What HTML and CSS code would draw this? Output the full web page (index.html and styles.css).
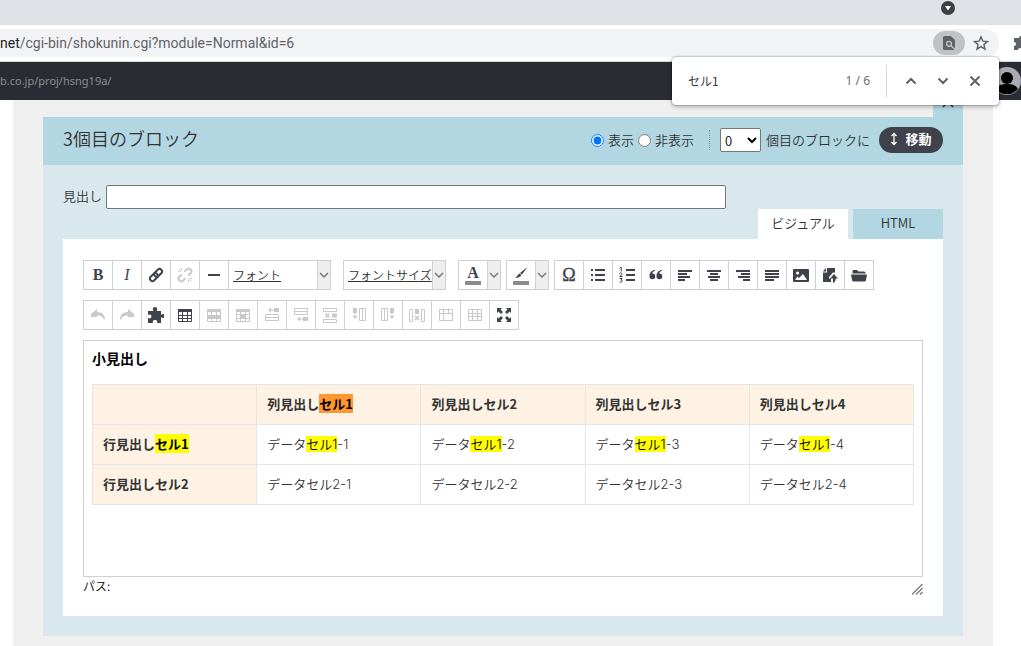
FILE: index.html
```html
<!DOCTYPE html>
<html lang="ja">
<head>
<meta charset="utf-8">
<title>ブロック編集</title>
<link rel="stylesheet" href="styles.css">
</head>
<body>
<div class="tabstrip">
  <button class="tab-search" aria-label="タブを検索"><svg width="14" height="14" viewBox="0 0 14 14"><circle cx="7" cy="7" r="7" fill="#3c4043"/><path d="M4 5h6L7 9.500z" fill="#fff"/></svg></button>
</div>
<div class="browser-bar">
  <div class="omnibox">
    <span class="url"><b>net</b>/cgi-bin/shokunin.cgi?module=Normal&amp;id=6</span>
    <button class="find-chip" aria-label="ページ内検索"><svg width="16" height="16" viewBox="0 0 16 16"><path d="M3.500 1h6.300L14 5v8.500a1.500 1.500 0 0 1-1.500 1.500h-9A1.500 1.500 0 0 1 2 13.500v-11A1.500 1.500 0 0 1 3.500 1z" fill="#5f6368"/><circle cx="8" cy="8.800" r="2.400" fill="none" stroke="#c1c2c4" stroke-width="1.400"/><path d="M9.800 10.600L14 14.500" stroke="#c1c2c4" stroke-width="1.400"/></svg></button>
    <button class="star" aria-label="ブックマーク"><svg width="16" height="16" viewBox="0 0 16 16"><path d="M8 1.800l1.800 4.300 4.700.4-3.600 3.100 1.100 4.600L8 11.700l-4 2.500 1.100-4.600-3.600-3.100 4.700-.4z" fill="none" stroke="#5f6368" stroke-width="1.400"/></svg></button>
  </div>
  <button class="extension" aria-label="拡張機能"><svg width="16" height="16" viewBox="0 0 16 16"><path d="M2 3h4a2 2 0 0 1 4 0h3v4a2 2 0 0 1 0 4v4H9a2 2 0 0 0-4 0H1v-4a2 2 0 0 0 0-4V3z" fill="#5f6368"/></svg></button>
</div>
<header class="site-header">
  <a href="#" class="site-url">b.co.jp/proj/hsng19a/</a>
  <svg class="avatar" width="28" height="28" viewBox="0 0 28 28"><circle cx="14" cy="14" r="14" fill="#a9aab4"/><circle cx="14" cy="11" r="6" fill="#000"/><path d="M3 22c2-4 6-5 11-5s9 1 11 5a14 14 0 0 1-22 0z" fill="#000"/></svg>
</header>

<div class="findbar" role="search">
  <input type="text" class="find-input" value="セル1" aria-label="検索" autofocus>
  <span class="find-count">1 / 6</span>
  <button aria-label="前へ"><svg width="12" height="12" viewBox="0 0 12 12"><path d="M1.500 8.500L6 4l4.500 4.500"/></svg></button>
  <button aria-label="次へ"><svg width="12" height="12" viewBox="0 0 12 12"><path d="M1.500 3.500L6 8l4.500-4.500"/></svg></button>
  <button aria-label="閉じる"><svg width="12" height="12" viewBox="0 0 12 12"><path d="M1.500 1.500l9 9M10.500 1.500l-9 9"/></svg></button>
</div>

<main class="page">
  <section class="block">
    <button class="block-close" aria-label="ブロックを閉じる"><svg width="12" height="12" viewBox="0 0 12 12"><path d="M1 1l10 10M11 1L1 11" stroke="#333" stroke-width="1.500"/></svg></button>
    <div class="block-head">
      <h2>3個目のブロック</h2>
      <div class="visibility">
        <label><input type="radio" name="vis" checked>表示</label>
        <label><input type="radio" name="vis">非表示</label>
      </div>
      <div class="mover">
        <select id="pos"><option>0</option></select>
        <label for="pos">個目のブロックに</label>
        <button class="move"><svg width="8" height="14" viewBox="0 0 8 14"><path d="M4 2v10M1.500 4L4 1.500 6.500 4M1.500 10L4 12.500 6.500 10" fill="none" stroke="#fff" stroke-width="1.300"/></svg>移動</button>
      </div>
    </div>
    <div class="block-body">
      <div class="field"><label for="midashi">見出し</label><input type="text" id="midashi"></div>
      <div class="tabs"><button class="tab active">ビジュアル</button><button class="tab">HTML</button></div>
      <div class="panel">
        <div class="toolbar">
          <div class="group">
            <button class="glyph" aria-label="太字"><b>B</b></button>
            <button class="glyph" aria-label="斜体"><i>I</i></button>
            <button aria-label="リンク"><svg viewBox="0 0 16 16"><g transform="rotate(-45 8 8)" fill="none" stroke="currentColor" stroke-width="2"><rect x="0.500" y="5.500" width="9" height="5" rx="2.500"/><rect x="6.500" y="5.500" width="9" height="5" rx="2.500"/></g></svg></button>
            <button class="off" aria-label="リンク解除"><svg viewBox="0 0 16 16"><g transform="rotate(-45 8 8)" fill="none" stroke="currentColor" stroke-width="2"><path d="M6 5.200H3a2.800 2.800 0 0 0 0 5.600h3M10 5.200h3a2.800 2.800 0 0 1 0 5.600h-3"/></g><path d="M4.500 1v2.500M1 4.500h2.500M2 2l1.500 1.500M11.500 12.500V15M12.500 11.500H15M12.500 12.500L14 14" stroke="currentColor"/></svg></button>
            <button aria-label="水平線"><svg viewBox="0 0 16 16"><path d="M2 7h12v2H2z" fill="currentColor"/></svg></button>
            <button class="combo"><span>フォント</span><em><svg viewBox="0 0 10 10"><path d="M1 3l4 4 4-4"/></svg></em></button>
          </div>
          <div class="group wide">
            <button class="combo"><span>フォントサイズ</span><em><svg viewBox="0 0 10 10"><path d="M1 3l4 4 4-4"/></svg></em></button>
          </div>
          <div class="group wide">
            <button class="glyph color" aria-label="文字色"><b>A</b></button>
            <button class="drop" aria-label="文字色を選択"><svg viewBox="0 0 10 10"><path d="M1 3l4 4 4-4"/></svg></button>
          </div>
          <div class="group">
            <button class="color" aria-label="背景色"><svg viewBox="0 0 16 16"><path d="M14.500 2L9 9.500 7 8zM6.500 8.500l2 1.600C7 12.500 5 13 2 13c2-1 2.500-3.500 4.500-4.500z" fill="currentColor"/></svg></button>
            <button class="drop" aria-label="背景色を選択"><svg viewBox="0 0 10 10"><path d="M1 3l4 4 4-4"/></svg></button>
          </div>
          <div class="group">
            <button class="glyph omega" aria-label="特殊文字">Ω</button>
            <button aria-label="箇条書き"><svg viewBox="0 0 16 16"><path d="M1 2h2v2H1zM5 2h10v2H5zM1 7h2v2H1zM5 7h10v2H5zM1 12h2v2H1zM5 12h10v2H5z" fill="currentColor"/></svg></button>
            <button aria-label="番号付きリスト"><svg viewBox="0 0 16 16"><path d="M7 2h9v2H7zM7 7h9v2H7zM7 12h9v2H7z" fill="currentColor"/><path d="M.8 1L2.200 0v4.500M.5 6.500c1-1 3-.5 2.500.8L.8 9.500h2.700M.5 11.500h2.500l-1 1.500c2 0 1.500 2.500-1.300 2.200" fill="none" stroke="currentColor"/></svg></button>
            <button aria-label="引用"><svg viewBox="0 0 16 16"><path d="M7 3C3 3.500 1.500 6 1.500 9.500a2.900 2.900 0 1 0 2.800-3C4.500 5 5.500 4.200 7 4zM14 3c-4 .5-5.500 3-5.500 6.500a2.900 2.900 0 1 0 2.800-3c.2-1.500 1.200-2.300 2.700-2.500z" fill="currentColor"/></svg></button>
            <button aria-label="左揃え"><svg viewBox="0 0 16 16"><path d="M1 3h14v2H1zM1 6h9v2H1zM1 9h12v2H1zM1 12h7v2H1z" fill="currentColor"/></svg></button>
            <button aria-label="中央揃え"><svg viewBox="0 0 16 16"><path d="M1 3h14v2H1zM4 6h8v2H4zM2 9h12v2H2zM4 12h8v2H4z" fill="currentColor"/></svg></button>
            <button aria-label="右揃え"><svg viewBox="0 0 16 16"><path d="M1 3h14v2H1zM6 6h9v2H6zM3 9h12v2H3zM8 12h7v2H8z" fill="currentColor"/></svg></button>
            <button aria-label="両端揃え"><svg viewBox="0 0 16 16"><path d="M1 3h14v2H1zM1 6h14v2H1zM1 9h14v2H1zM1 12h9v2H1z" fill="currentColor"/></svg></button>
            <button aria-label="画像"><svg viewBox="0 0 16 16"><path fill-rule="evenodd" d="M1 2h14q1 0 1 1v11q0 1-1 1H1q-1 0-1-1V3q0-1 1-1zM2 13h12l-4-6-4 4-1.500-1.500zM3 6a1.600 1.600 0 1 0 3.200 0A1.600 1.600 0 1 0 3 6z" fill="currentColor"/></svg></button>
            <button aria-label="ファイル挿入"><svg viewBox="0 0 16 16"><path d="M5 1h8v4.500h-2l-4 4.500v1.500h2V15H1V5.500h4zM4 1v3.500H.8zM12 7l4 4.500h-2.300c0 2-.7 3.500-2.700 4.500v-4.500H8z" fill="currentColor"/></svg></button>
            <button aria-label="ファイル管理"><svg viewBox="0 0 16 16"><path d="M1.500 6V4q0-1 1-1H6l1.500 1.500H13q1.500 0 1.500 1.500v.5h-13zM0 7.500h16L15 13q-.3 1.500-1.500 1.500h-11Q1.300 14.500 1 13z" fill="currentColor"/></svg></button>
          </div>
        </div>
        <div class="toolbar">
          <div class="group">
            <button class="off" aria-label="元に戻す"><svg viewBox="0 0 16 16"><path d="M1 7l6-5v3c5 0 8 3 8 7.500h-1.500C13.500 9.500 11 8.500 7 8.500V10H1z" fill="currentColor"/></svg></button>
            <button class="off" aria-label="やり直す"><svg viewBox="0 0 16 16"><path d="M15 7L9 2v3c-5 0-8 3-8 7.500h1.500C2.500 9.500 5 8.500 9 8.500V10h6z" fill="currentColor"/></svg></button>
            <button aria-label="部品"><svg viewBox="0 0 16 16"><path d="M0 4h5.500C4 2 5 0 7 0s3 2 1.500 4H13v4c1-1.500 4-1.500 4 1s-3 2.500-4 1v6H9c1-2-.5-3-2-3s-3 1-2 3H0v-5c2 1 3.500 0 3.500-1.500S2 7 0 8z" fill="currentColor"/></svg></button>
            <button aria-label="表"><svg viewBox="0 0 16 16"><path d="M1.500 2.500h13v12h-13z" fill="none" stroke="currentColor"/><path d="M1 2h14v3H1z" fill="currentColor"/><path d="M1 8.500h14M1 11.500h14M5.500 4v10M10.500 4v10" stroke="currentColor"/></svg></button>
            <button class="off" aria-label="行のプロパティ"><svg viewBox="0 0 16 16"><path d="M1.500 2.500h13v12h-13zM1 11.500h14M5.500 4v10M10.500 4v10" fill="none" stroke="currentColor"/><path d="M1 2h14v3H1zM1 8h14v3H1z" fill="currentColor"/></svg></button>
            <button class="off" aria-label="セルのプロパティ"><svg viewBox="0 0 16 16"><path d="M1.500 2.500h13v12h-13zM1 7.500h14M1 11.500h14M5.500 4v10M10.500 4v10" fill="none" stroke="currentColor"/><path d="M1 2h14v3H1zM5 7h6v5H5z" fill="currentColor"/></svg></button>
            <button class="off" aria-label="上に行を挿入"><svg viewBox="0 0 16 16"><path d="M1.500 7.500h13v6h-13zM1.500 10.500h13" fill="none" stroke="currentColor"/><path d="M10 1h5v4h-5zM4 3l3-2.500v2h3v1H7v2z" fill="currentColor"/></svg></button>
            <button class="off" aria-label="下に行を挿入"><svg viewBox="0 0 16 16"><path d="M1.500 1.500h13v6h-13zM1.500 4.500h13" fill="none" stroke="currentColor"/><path d="M10 10h5v4h-5zM4 12l3-2.500v2h3v1H7v2z" fill="currentColor"/></svg></button>
            <button class="off" aria-label="行を削除"><svg viewBox="0 0 16 16"><path d="M1.500 1.500h13v3h-13zM1.500 12.500h13v3h-13z" fill="none" stroke="currentColor"/><path d="M3.500 6.500l4 4M7.500 6.500l-4 4" stroke="currentColor" stroke-width="1.500"/><path d="M10 6.500h5v4h-5z" fill="currentColor"/></svg></button>
            <button class="off" aria-label="左に列を挿入"><svg viewBox="0 0 16 16"><path d="M8.500 1.500h6v12h-6zM11.500 1.500v12" fill="none" stroke="currentColor"/><path d="M2 1h4v5H2zM4 12L1.500 9h2V6h1v3h2z" fill="currentColor"/></svg></button>
            <button class="off" aria-label="右に列を挿入"><svg viewBox="0 0 16 16"><path d="M1.500 1.500h6v12h-6zM4.500 1.500v12" fill="none" stroke="currentColor"/><path d="M10 1h4v5h-4zM12 12L9.500 9h2V6h1v3h2z" fill="currentColor"/></svg></button>
            <button class="off" aria-label="列を削除"><svg viewBox="0 0 16 16"><path d="M.5 2.500h3v12h-3zM12.500 2.500h3v12h-3z" fill="none" stroke="currentColor"/><path d="M6 9l4 4M10 9l-4 4" stroke="currentColor" stroke-width="1.500"/><path d="M6 2h4v5H6z" fill="currentColor"/></svg></button>
            <button class="off" aria-label="セルを分割"><svg viewBox="0 0 16 16"><path d="M1.500 2.500h13v11h-13zM1.500 6.500h13M5.500 2.500v11M10.500 2.500v4" fill="none" stroke="currentColor"/></svg></button>
            <button class="off" aria-label="セルを結合"><svg viewBox="0 0 16 16"><path d="M1.500 2.500h13v11h-13zM1.500 6.500h13M1.500 9.500h13M5.500 2.500v11M10.500 2.500v11" fill="none" stroke="currentColor"/></svg></button>
            <button aria-label="全画面"><svg viewBox="0 0 16 16"><path d="M1 1h5L4.500 2.500 7 5 5 7 2.500 4.500 1 6zM15 1h-5l1.500 1.500L9 5l2 2 2.500-2.500L15 6zM1 15h5l-1.500-1.500L7 11 5 9l-2.500 2.500L1 10zM15 15h-5l1.500-1.500L9 11l2-2 2.500 2.500L15 10z" fill="currentColor"/></svg></button>
          </div>
        </div>
        <div class="editor" contenteditable="true">
          <h3>小見出し</h3>
          <table>
            <tr><th></th><th>列見出し<mark class="current">セル1</mark></th><th>列見出しセル2</th><th>列見出しセル3</th><th>列見出しセル4</th></tr>
            <tr><th>行見出し<mark>セル1</mark></th><td>データ<mark>セル1</mark>-1</td><td>データ<mark>セル1</mark>-2</td><td>データ<mark>セル1</mark>-3</td><td>データ<mark>セル1</mark>-4</td></tr>
            <tr><th>行見出しセル2</th><td>データセル2-1</td><td>データセル2-2</td><td>データセル2-3</td><td>データセル2-4</td></tr>
          </table>
        </div>
        <div class="status"><span>パス:</span><svg width="11" height="11" viewBox="0 0 11 11"><path d="M0 10.500L10.500 0M4 10.500L10.500 4M8 10.500l2.500-2.500" stroke="#777" stroke-width="1.300"/></svg></div>
      </div>
    </div>
  </section>
</main>
</body>
</html>
```

FILE: styles.css
```css
* { box-sizing: border-box; }
body {
  margin: 0;
  background: #fff;
  color: #333;
  font: 350 13px/20px "Noto Sans CJK JP", sans-serif;
  min-height: 100vh;
  display: flex;
  flex-direction: column;
  position: relative;
  overflow: hidden;
}
button, input, select { font: inherit; color: inherit; margin: 0; }
button { border: 0; padding: 0; background: none; display: flex; align-items: center; justify-content: center; }

.tabstrip { height: 25px; background: #dee1e6; display: flex; justify-content: flex-end; align-items: flex-start; padding: 1px 66px 0 0; }
.browser-bar { height: 37px; display: flex; align-items: center; border-bottom: 1px solid #cfdcdc; }
.omnibox { flex: 1; height: 28px; display: flex; align-items: center; background: #f1f3f4; border-radius: 0 14px 14px 0; padding-right: 10px; }
.url { flex: 1; font: 14px/20px Roboto, sans-serif; color: #5f6368; white-space: nowrap; }
.url b { font-weight: 400; color: #202124; }
.find-chip { width: 32px; height: 24px; border-radius: 12px; background: #c1c2c4; }
.star { width: 16px; margin-left: 8px; }
.extension { width: 8px; margin-left: 14px; justify-content: flex-start; overflow: hidden; }
.extension svg { flex: none; }

.site-header { height: 38px; background: #2a2c34; display: flex; align-items: center; justify-content: space-between; padding-bottom: 1px; }
.site-url { font: 11px/16px "Noto Sans", sans-serif; color: #8b8d8f; text-decoration: none; }
.avatar { flex: none; }

.findbar {
  position: absolute; top: 57px; right: 22px; z-index: 5;
  width: 327px; height: 48px;
  display: flex; align-items: center;
  background: #fff; border-radius: 4px;
  box-shadow: 0 0 2px rgba(0,0,0,.5), 0 2px 4px rgba(0,0,0,.25);
  padding: 8px 8px 8px 16px;
}
.find-input { flex: 1; min-width: 0; border: 0; outline: 0; padding: 0; background: none; font-size: 12px; color: #222; }
.find-count { font: 12px/20px "Noto Sans", sans-serif; color: #6b6f74; border-right: 1px solid #d5d7da; padding: 6px 16px 6px 0; margin-right: 8px; }
.findbar button { width: 32px; height: 32px; }
.findbar path { fill: none; stroke: #5f6368; stroke-width: 2; }

.page { flex: 1; background: #efefef; margin: 0 28px 0 13px; padding: 17px 30px 9px; }
.block { position: relative; background: #d8e8ec; }
.block-close { position: absolute; right: 0; bottom: 100%; width: 30px; height: 30px; background: #b2d7e2; }
.block-head { display: flex; align-items: center; background: #b2d7e2; height: 48px; padding: 0 20px 2px; }
.block-head h2 { flex: 1; margin: 0; font-size: 18px; line-height: 28px; font-weight: 350; padding-bottom: 4px; }
.visibility { display: flex; gap: 4px; border-right: 1px dotted #7d979f; padding-right: 15px; }
.visibility label { display: flex; align-items: center; gap: 4px; }
.visibility input { width: 13px; height: 13px; }
.mover { display: flex; align-items: center; padding-left: 10px; }
.mover select { width: 41px; height: 24px; background: #fff; border: 1px solid #767676; border-radius: 2px; color: #000; padding: 0; margin-right: 5px; }
.move { width: 64px; height: 26px; border-radius: 13px; background: #3f424b; color: #fff; font-weight: 700; margin-left: 9px; gap: 7px; padding-bottom: 2px; }

.block-body { padding: 20px; }
.field { display: flex; align-items: center; gap: 4px; }
.field label { padding-bottom: 2px; }
.field input { flex: 0 1 620px; min-width: 0; height: 24px; background: #fff; border: 1px solid #767676; border-radius: 2px; }
.tabs { display: flex; justify-content: flex-end; gap: 5px; }
.tab { width: 90px; height: 30px; background: #b2d7e2; padding-bottom: 2px; }
.tab.active { background: #fff; }
.panel { background: #fff; padding: 21px 20px; }

.toolbar { display: flex; gap: 5px; margin-bottom: 10px; }
.group { display: flex; flex: none; }
.wide { margin-left: 7px; }
.group button { width: 30px; height: 30px; border: 1px solid #d0d0d0; color: #3f424b; background: #fff; }
.group button + button { margin-left: -1px; }
.group button svg { width: 16px; height: 16px; }
.group .off { color: #c8c9cb; }
.group .glyph { font: 16px/20px "Liberation Serif", serif; }
.group .omega { font-size: 18px; padding-bottom: 1px; -webkit-text-stroke: 1px #3f424b; -webkit-text-stroke-width: thin; }
.group .color { flex-direction: column; position: relative; padding-bottom: 5px; }
.color::after { content: ""; position: absolute; left: 6px; bottom: 4px; width: 16px; height: 4px; background: #8b8b8b; }
.group .drop { width: 14px; background: #eee; }
.group .combo { width: 103px; justify-content: space-between; font-size: 12px; padding-left: 4px; color: #333; }
.combo span { flex: 1; text-align: left; text-decoration: underline; white-space: nowrap; }
.combo em { align-self: stretch; width: 13px; display: flex; align-items: center; justify-content: center; background: #eee; border-left: 1px solid #d0d0d0; }
.group .combo svg, .group .drop svg { width: 10px; height: 10px; }
.combo path, .drop path { fill: none; stroke: #777; stroke-width: 1.500; }

.editor { min-height: 237px; border: 1px solid #d0d0d0; padding: 7px 8px; outline: 0; }
.editor h3 { margin: 0 0 16px; font-size: 14px; line-height: 20px; color: #000; font-weight: 700; }
.editor table { width: 100%; table-layout: fixed; border-collapse: collapse; }
.editor th, .editor td { height: 40px; border: 1px solid #e5e5e5; padding: 0 10px 2px; text-align: left; }
.editor td { font-family: Inter, "Noto Sans CJK JP", sans-serif; }
.editor th { background: #fdf2e4; font-weight: 700; }
mark { background: #ff0; color: #000; }
mark.current { background: #ff9632; }
.status { display: flex; justify-content: space-between; align-items: flex-end; font-size: 12px; line-height: 18px; color: #000; }
```
